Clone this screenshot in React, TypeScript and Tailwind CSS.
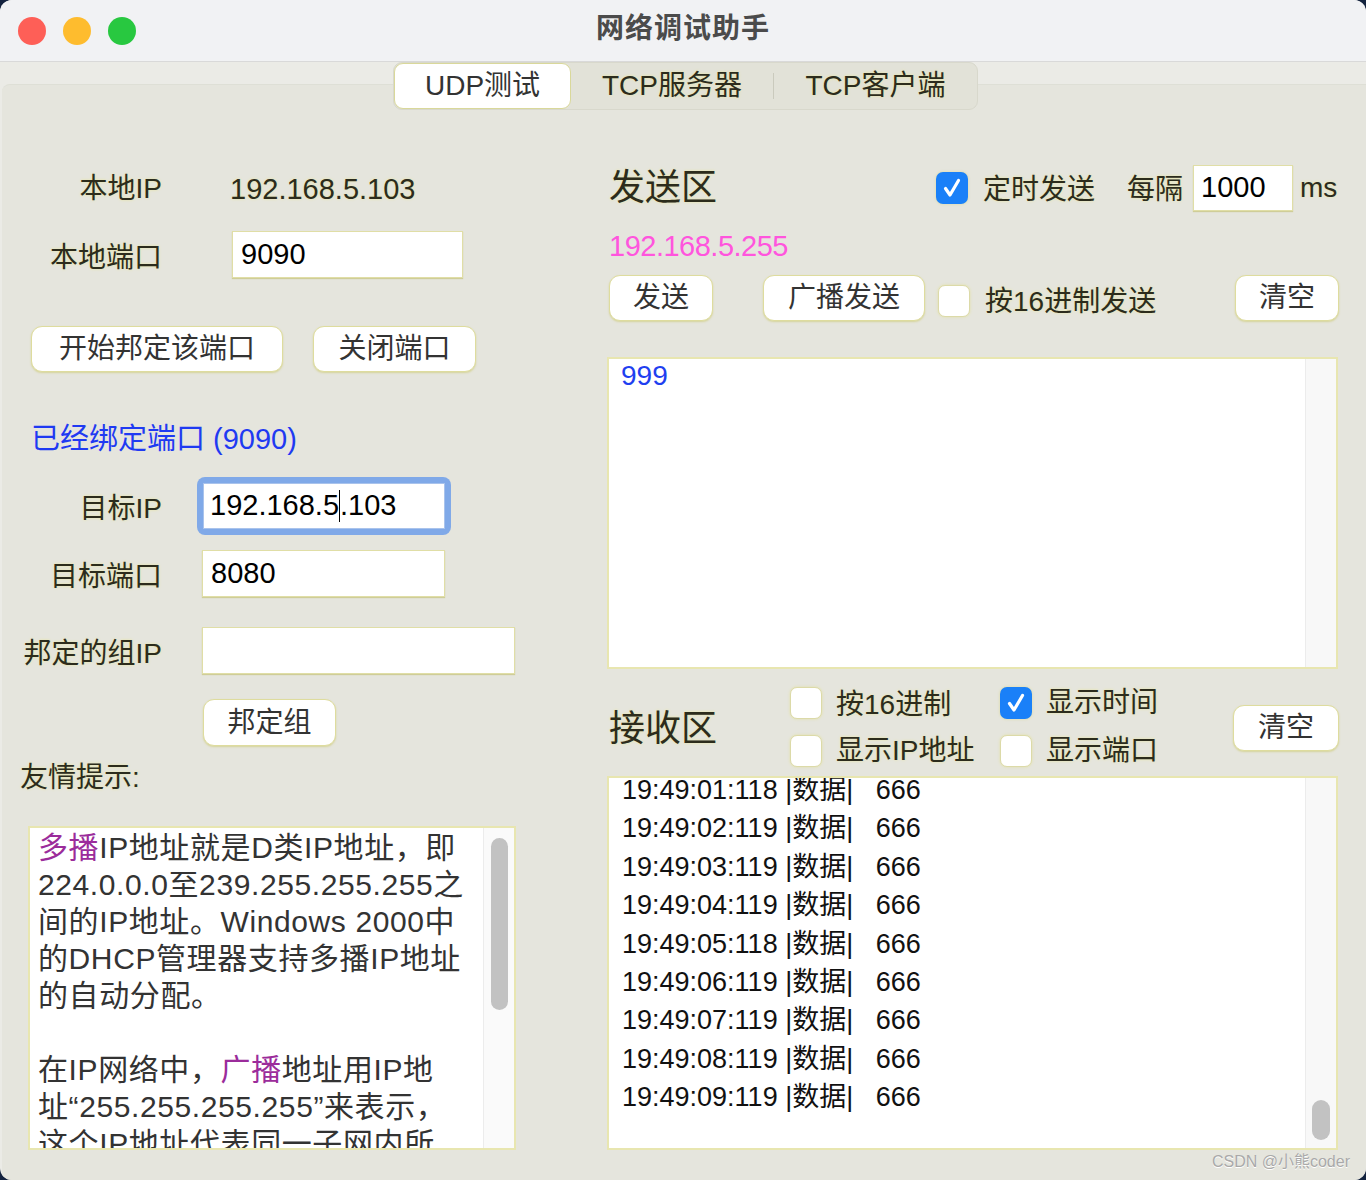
import React from "react";

const glow = "[text-shadow:0_0_3px_#e9e79f] text-[#2c2c1c] leading-[36px]";

function Check({ checked = false }: { checked?: boolean }) {
  if (checked) {
    return (
      <span className="w-[32px] h-[32px] shrink-0 rounded-[7px] bg-[#1a80f8] flex items-center justify-center shadow-[0_0_3px_#dcda9c]">
        <svg width="32" height="32" viewBox="0 0 32 32">
          <path d="M9.5 16.5 L14 23 L22.5 8.5" fill="none" stroke="white" strokeWidth="3.2" strokeLinecap="round" strokeLinejoin="round" />
        </svg>
      </span>
    );
  }
  return <span className="block w-[32px] h-[32px] shrink-0 rounded-[7px] bg-white border border-[#dcdaa8] shadow-[0_0_3px_#e3e1a4]" />;
}

function Btn({ className = "", children }: { className?: string; children: React.ReactNode }) {
  return (
    <div className={`h-[46px] shrink-0 rounded-[11px] bg-white border border-[#dedc9e] shadow-[0_1px_2px_#d6d49a] flex items-center justify-center text-[28px] text-[#333] ${className}`}>
      {children}
    </div>
  );
}

function Field({ className = "", children }: { className?: string; children?: React.ReactNode }) {
  return (
    <div className={`h-[47px] shrink-0 bg-white border border-[#e0dea6] shadow-[0_1px_1px_#cfcd98] flex items-center pl-[8px] text-[29px] text-black ${className}`}>
      {children}
    </div>
  );
}

const logs = ["01:118", "02:119", "03:119", "04:119", "05:118", "06:119", "07:119", "08:119", "09:119"];

export default function App() {
  return (
    <div className="w-[1366px] h-[1180px] bg-[#14233f] font-['Liberation_Sans','Noto_Sans_CJK_SC',sans-serif] overflow-hidden">
      <div className="w-full h-full rounded-[12px] overflow-hidden bg-[#ebebe6] flex flex-col relative">
        {/* title bar */}
        <div className="h-[62px] shrink-0 bg-[#f1f2f4] border-b border-[#d9d9d9] grid grid-cols-[1fr_auto_1fr] items-center">
          <div className="flex items-center gap-[17px] pl-[18px]">
            <span className="w-[28px] h-[28px] rounded-full bg-[#fe5f57]" />
            <span className="w-[28px] h-[28px] rounded-full bg-[#febc2e]" />
            <span className="w-[28px] h-[28px] rounded-full bg-[#28c840]" />
          </div>
          <div className="text-[28px] font-semibold tracking-[1px] text-[#4b4b4b] -mt-[4px]">网络调试助手</div>
          <div />
        </div>

        {/* tabs */}
        <div className="relative z-10 -mb-[26px] pl-[393px]">
          <div className={`w-[585px] h-[48px] rounded-[9px] bg-[#e2e2d8] border border-[#d8d8cc] flex items-center text-[28px] ${glow}`}>
            <div className="w-[177px] h-[46px] rounded-[9px] bg-white border border-[#d9d89a] flex items-center justify-center text-[#333] [text-shadow:none]">
              UDP测试
            </div>
            <div className="w-[202px] text-center">TCP服务器</div>
            <div className="w-px h-[26px] bg-[#cacabd]" />
            <div className="flex-1 text-center">TCP客户端</div>
          </div>
        </div>

        {/* pane */}
        <div className="flex-1 ml-[2px] rounded-tl-[8px] bg-[#e5e5dd] border-t border-[#dedfd6] flex">
          {/* left column */}
          <div className="w-[605px] shrink-0 flex flex-col pt-[81px]">
            <div className="h-[46px] flex items-center">
              <div className={`w-[160px] text-right text-[28px] ${glow}`}>本地IP</div>
              <div className={`ml-[68px] text-[29px] ${glow}`}>192.168.5.103</div>
            </div>
            <div className="mt-[19px] h-[47px] flex items-center">
              <div className={`w-[160px] text-right text-[28px] mt-[6px] ${glow}`}>本地端口</div>
              <Field className="ml-[70px] w-[231px]">9090</Field>
            </div>
            <div className="mt-[48px] flex items-center pl-[29px] gap-[30px]">
              <Btn className="w-[252px]">开始邦定该端口</Btn>
              <Btn className="w-[163px]">关闭端口</Btn>
            </div>
            <div className="mt-[48px] h-[40px] flex items-center pl-[29px] text-[29px] text-[#1f3af2]">已经绑定端口 (9090)</div>
            <div className="mt-[17px] h-[58px] flex items-center">
              <div className={`w-[160px] text-right text-[28px] mt-[6px] ${glow}`}>目标IP</div>
              <div className="ml-[35px] w-[254px] h-[58px] rounded-[8px] bg-[#80a9e8] p-[6px]">
                <div className="w-full h-full bg-white border border-[#a9c3ec] flex items-center pl-[6px] text-[29px] text-black">
                  192.168.5<span className="inline-block w-px h-[32px] bg-black" />.103
                </div>
              </div>
            </div>
            <div className="mt-[15px] h-[47px] flex items-center">
              <div className={`w-[160px] text-right text-[28px] mt-[6px] ${glow}`}>目标端口</div>
              <Field className="ml-[40px] w-[243px]">8080</Field>
            </div>
            <div className="mt-[30px] h-[47px] flex items-center">
              <div className={`w-[160px] text-right text-[28px] mt-[6px] ${glow}`}>邦定的组IP</div>
              <Field className="ml-[40px] w-[313px]" />
            </div>
            <div className="mt-[25px] pl-[201px]">
              <Btn className="w-[133px] h-[47px]">邦定组</Btn>
            </div>
            <div className={`mt-[14px] h-[36px] flex items-center pl-[18px] text-[28px] ${glow}`}>友情提示:</div>
            <div className="mt-[30px] ml-[26px] w-[488px] h-[324px] bg-white border-2 border-[#e8e6b0] flex overflow-hidden">
              <div className="flex-1 pl-[8px] pt-[1px] text-[30px] leading-[37px] tracking-[0.6px] text-[#333] whitespace-nowrap overflow-hidden">
                <div><span className="text-[#9b2c9b]">多播</span>IP地址就是D类IP地址，即</div>
                <div>224.0.0.0至239.255.255.255之</div>
                <div>间的IP地址。Windows 2000中</div>
                <div>的DHCP管理器支持多播IP地址</div>
                <div>的自动分配。</div>
                <div>&nbsp;</div>
                <div>在IP网络中，<span className="text-[#9b2c9b]">广播</span>地址用IP地</div>
                <div>址“255.255.255.255”来表示，</div>
                <div>这个IP地址代表同一子网内所</div>
              </div>
              <div className="w-[31px] shrink-0 bg-[#fafafa] border-l border-[#ececec] flex justify-center pt-[10px]">
                <div className="w-[17px] h-[172px] rounded-full bg-[#c2c2c2]" />
              </div>
            </div>
          </div>

          {/* right column */}
          <div className="w-[732px] shrink-0 flex flex-col pt-[80px]">
            <div className="h-[46px] flex items-center">
              <div className={`ml-[2px] w-[110px] text-[36px] ${glow}`}>发送区</div>
              <div className="ml-[217px]"><Check checked /></div>
              <div className={`ml-[15px] text-[28px] mt-[4px] ${glow}`}>定时发送</div>
              <div className={`ml-[32px] text-[28px] mt-[4px] ${glow}`}>每隔</div>
              <div className="ml-[10px] w-[100px] h-[46px] bg-white border border-[#e0dea6] shadow-[0_1px_1px_#cfcd98] flex items-center pl-[7px] text-[29px] text-black">1000</div>
              <div className={`ml-[7px] text-[28px] ${glow}`}>ms</div>
            </div>
            <div className="mt-[19px] h-[34px] flex items-center ml-[2px] text-[29px] text-[#ff55dd] tracking-[-0.5px]">192.168.5.255</div>
            <div className="mt-[11px] h-[46px] flex items-center">
              <Btn className="ml-[2px] w-[104px]">发送</Btn>
              <Btn className="ml-[50px] w-[162px]">广播发送</Btn>
              <div className="ml-[13px] mt-[6px]"><Check /></div>
              <div className={`ml-[15px] text-[28px] mt-[8px] ${glow}`}>按16进制发送</div>
              <Btn className="ml-auto w-[104px]">清空</Btn>
            </div>
            <div className="mt-[36px] w-[731px] h-[312px] bg-white border-2 border-[#e8e6b0] flex">
              <div className="flex-1 pl-[12px] text-[28px] leading-[34px] text-[#1f3ff0]">999</div>
              <div className="w-[31px] shrink-0 bg-[#f8f8f8] border-l border-[#ececec]" />
            </div>
            <div className="mt-[17px] h-[82px] flex items-center">
              <div className={`ml-[2px] w-[110px] text-[36px] mt-[4px] ${glow}`}>接收区</div>
              <div className="ml-[71px] grid grid-cols-[210px_auto] gap-y-[16px]">
                <div className="h-[32px] flex items-center">
                  <Check />
                  <span className={`ml-[14px] text-[28px] mt-[4px] ${glow}`}>按16进制</span>
                </div>
                <div className="h-[32px] flex items-center">
                  <Check checked />
                  <span className={`ml-[14px] text-[28px] ${glow}`}>显示时间</span>
                </div>
                <div className="h-[32px] flex items-center">
                  <Check />
                  <span className={`ml-[14px] text-[28px] ${glow}`}>显示IP地址</span>
                </div>
                <div className="h-[32px] flex items-center">
                  <Check />
                  <span className={`ml-[14px] text-[28px] ${glow}`}>显示端口</span>
                </div>
              </div>
              <Btn className="ml-auto w-[106px] mt-[2px]">清空</Btn>
            </div>
            <div className="mt-[8px] w-[731px] h-[374px] bg-white border-2 border-[#e8e6b0] flex overflow-hidden">
              <div className="flex-1 pl-[13px] overflow-hidden">
                <div className="-mt-[7px] text-[27px] leading-[38.4px] text-[#111] whitespace-pre">
                  {logs.map((t) => (
                    <div key={t}>{`19:49:${t} |数据|   666`}</div>
                  ))}
                </div>
              </div>
              <div className="w-[31px] shrink-0 bg-[#f8f8f8] border-l border-[#ececec] flex flex-col justify-end items-center pb-[8px]">
                <div className="w-[18px] h-[40px] rounded-full bg-[#c2c2c2]" />
              </div>
            </div>
          </div>
        </div>

        <div className="absolute right-[16px] bottom-[6px] text-[16px] text-[#a9a9a9] [text-shadow:0_1px_0_#ffffff]">CSDN @小熊coder</div>
      </div>
    </div>
  );
}
